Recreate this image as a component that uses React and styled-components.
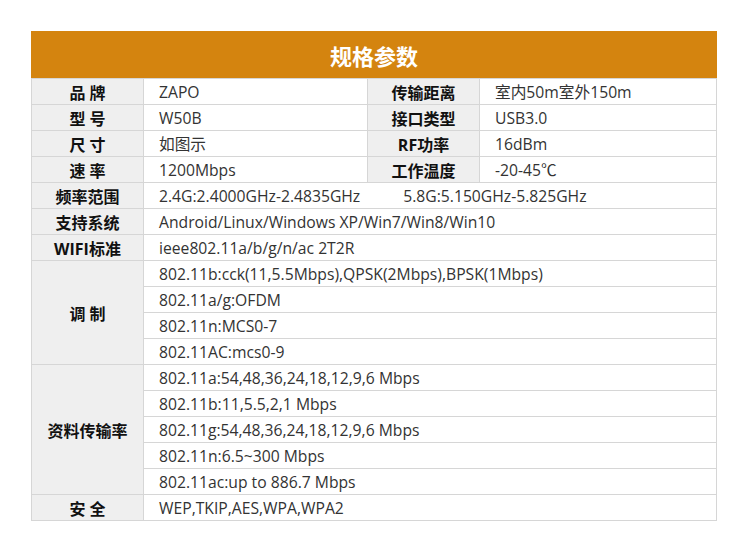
import React from 'react';
import styled, { createGlobalStyle } from 'styled-components';

const GlobalStyle = createGlobalStyle`
  body {
    margin: 0;
    background: #fff;
    font-family: "Open Sans", "Noto Sans CJK SC", sans-serif;
  }
`;

const Page = styled.section`
  width: 750px;
  height: 542px;
  padding: 31px 0 0 31px;
  box-sizing: border-box;
`;

const Header = styled.div`
  width: 686px;
  height: 47px;
  background: #d4840f;
  color: #fff;
  font-size: 22px;
  font-weight: bold;
  display: flex;
  align-items: center;
  justify-content: center;
`;

const Grid = styled.div`
  width: 686px;
  box-sizing: border-box;
  display: grid;
  grid-template-columns: 111px 223px 111px 236px;
  grid-auto-rows: 25px;
  gap: 1px;
  padding: 1px;
  background: #d6d6d6;
`;

const Label = styled.div`
  grid-row: span ${(p) => p.rows || 1};
  background: #efefef;
  color: #111;
  font-size: 16px;
  font-weight: bold;
  display: flex;
  align-items: center;
  justify-content: center;
  white-space: pre;
`;

const Value = styled.div`
  grid-column: span ${(p) => p.cols || 1};
  background: #fff;
  color: #333;
  font-size: 15.7px;
  display: flex;
  align-items: center;
  padding-left: 15px;
  white-space: nowrap;
`;

const Gap = styled.span`
  margin-left: 43px;
`;

const pairs = [
  ['品 牌', 'ZAPO', '传输距离', '室内50m室外150m'],
  ['型 号', 'W50B', '接口类型', 'USB3.0'],
  ['尺 寸', '如图示', 'RF功率', '16dBm'],
  ['速 率', '1200Mbps', '工作温度', '-20-45℃'],
];

const modulation = [
  '802.11b:cck(11,5.5Mbps),QPSK(2Mbps),BPSK(1Mbps)',
  '802.11a/g:OFDM',
  '802.11n:MCS0-7',
  '802.11AC:mcs0-9',
];

const rates = [
  '802.11a:54,48,36,24,18,12,9,6 Mbps',
  '802.11b:11,5.5,2,1 Mbps',
  '802.11g:54,48,36,24,18,12,9,6 Mbps',
  '802.11n:6.5~300 Mbps',
  '802.11ac:up to 886.7 Mbps',
];

function App() {
  return (
    <Page>
      <GlobalStyle />
      <Header>规格参数</Header>
      <Grid>
        {pairs.map(([a, b, c, d]) => (
          <React.Fragment key={a}>
            <Label>{a}</Label>
            <Value>{b}</Value>
            <Label>{c}</Label>
            <Value>{d}</Value>
          </React.Fragment>
        ))}
        <Label>频率范围</Label>
        <Value cols={3}>
          2.4G:2.4000GHz-2.4835GHz<Gap>5.8G:5.150GHz-5.825GHz</Gap>
        </Value>
        <Label>支持系统</Label>
        <Value cols={3}>Android/Linux/Windows XP/Win7/Win8/Win10</Value>
        <Label>WIFI标准</Label>
        <Value cols={3}>ieee802.11a/b/g/n/ac 2T2R</Value>
        <Label rows={4}>调 制</Label>
        {modulation.map((m) => (
          <Value key={m} cols={3}>{m}</Value>
        ))}
        <Label rows={5}>资料传输率</Label>
        {rates.map((r) => (
          <Value key={r} cols={3}>{r}</Value>
        ))}
        <Label>安 全</Label>
        <Value cols={3}>WEP,TKIP,AES,WPA,WPA2</Value>
      </Grid>
    </Page>
  );
}

export default App;
